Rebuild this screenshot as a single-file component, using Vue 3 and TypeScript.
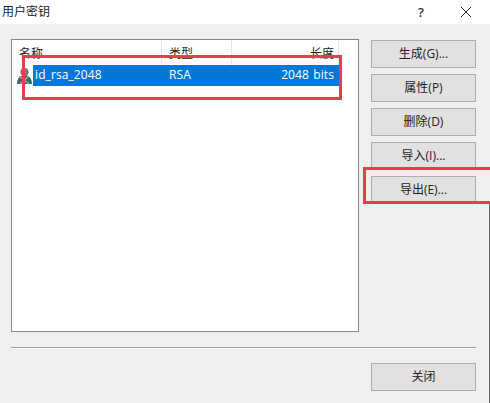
<script setup lang="ts">
const actions: string[] = ['生成(G)...', '属性(P)', '删除(D)', '导入(I)...', '导出(E)...']
</script>

<template>
  <div class="dialog">
    <header class="titlebar">
      <span class="title">用户密钥</span>
      <div class="controls">
        <span class="help">?</span>
        <svg class="close" width="12" height="12" viewBox="0 0 12 12" aria-hidden="true">
          <path d="M1 1 L11 11 M11 1 L1 11" stroke="#222" stroke-width="1" fill="none" />
        </svg>
      </div>
    </header>
    <main class="body">
      <div class="top">
        <section class="list">
          <div class="thead">
            <span class="th col-name"><span class="th-text">名称</span></span>
            <span class="th col-type"><span class="th-text">类型</span></span>
            <span class="th col-len"><span class="th-text">长度</span></span>
          </div>
          <div class="row">
            <svg class="key" width="17" height="18" viewBox="0 0 17 18" aria-hidden="true">
              <circle cx="8.5" cy="5" r="4" fill="#66706a" />
              <path d="M1 17 C1 11 4 8.5 8.5 8.5 C13 8.5 16 11 16 17 Z" fill="#2f6f68" />
              <path d="M3 9 L13 17 M13 9 L4 17" stroke="#a3aeaa" stroke-width="1.4" />
              <path d="M6 2 L11 7 M11 2 L6 7" stroke="#8f9994" stroke-width="1" />
            </svg>
            <div class="selected">
              <span class="col-name-text">id_rsa_2048</span>
              <span class="col-type-text">RSA</span>
              <span class="col-len-text">2048 bits</span>
            </div>
          </div>
        </section>
        <nav class="actions">
          <button v-for="a in actions" :key="a" class="btn" type="button">{{ a }}</button>
        </nav>
      </div>
      <hr class="divider" />
      <footer class="footer">
        <button class="btn" type="button">关闭</button>
      </footer>
    </main>
    <div class="mark mark-row"></div>
    <div class="mark mark-btn"></div>
    <div class="edge"></div>
  </div>
</template>

<style>
html, body { margin: 0; padding: 0; background: #f0f0f0; }
</style>

<style scoped>
.dialog {
  position: relative;
  width: 490px;
  height: 403px;
  overflow: hidden;
  background: #f0f0f0;
  color: #1a1a1a;
  font-family: "Open Sans", "Noto Sans CJK SC", sans-serif;
  font-size: 12px;
  box-sizing: border-box;
}
.titlebar {
  height: 24px;
  background: #fff;
  display: flex;
  align-items: center;
  justify-content: space-between;
  padding-left: 2px;
}
.title { font-size: 12px; color: #222; position: relative; top: -1px; }
.controls { display: flex; align-items: center; gap: 36px; padding-right: 18px; }
.help { font-size: 13px; font-weight: 600; color: #333; }
.body { padding: 15px 14px 0 11px; }
.top { display: flex; justify-content: space-between; align-items: flex-start; }
.list {
  box-sizing: border-box;
  width: 348px;
  height: 293px;
  background: #fff;
  border: 1px solid #828790;
}
.thead { display: flex; height: 25px; line-height: 25px; color: #222; }
.th { box-sizing: border-box; border-right: 1px solid #e5e5e5; padding: 0 7px; }
.th-text { position: relative; top: 1px; }
.col-name { width: 150px; }
.col-type { width: 70px; }
.col-len { width: 107px; text-align: right; padding-right: 4px; }
.row { display: flex; align-items: center; height: 21px; }
.key { margin-left: 4px; flex: none; margin-right: 0; }
.selected {
  flex: none;
  width: 306px;
  height: 21px;
  line-height: 20px;
  background: #0078d7;
  color: #fff;
  display: flex;
  letter-spacing: 0.1px;
}
.col-name-text { width: 136px; padding-left: 2px; box-sizing: border-box; }
.col-type-text { width: 70px; }
.col-len-text { width: 95px; text-align: right; word-spacing: 1px; }
.actions { display: flex; flex-direction: column; gap: 6px; padding-top: 1px; }
.btn {
  box-sizing: border-box;
  width: 105px;
  height: 28px;
  padding: 0;
  background: #e1e1e1;
  border: 1px solid #adadad;
  color: #222;
  font: inherit;
  line-height: 1;
}
.divider {
  margin: 15px 0 0;
  border: 0;
  border-top: 1px solid #a0a0a0;
  border-bottom: 1px solid #fff;
  height: 0;
}
.footer { display: flex; justify-content: flex-end; padding-top: 14px; }
.mark {
  position: absolute;
  box-sizing: border-box;
  border: 3px solid #e5404a;
}
.mark-row { left: 22px; top: 55px; width: 320px; height: 45px; }
.mark-btn { left: 363px; top: 167px; width: 130px; height: 37px; }
.edge { position: absolute; right: 0; top: 204px; bottom: 0; width: 1px; background: #6a6a6a; }
</style>
